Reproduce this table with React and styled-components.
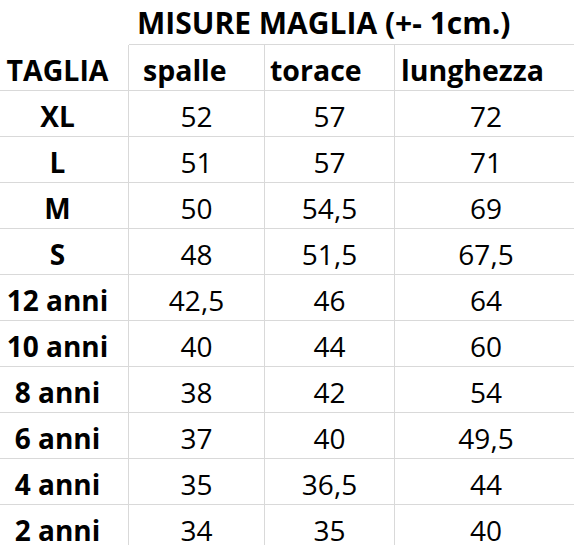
import React from 'react'
import styled, { createGlobalStyle } from 'styled-components'

const GlobalStyle = createGlobalStyle`
  html, body { margin: 0; padding: 0; background: #fff; overflow: hidden; }
  body { font-family: "Open Sans", "Noto Sans", sans-serif; color: #000; }
`;

const Sheet = styled.div`
  display: grid;
  grid-template-columns: 142px 136px 130px 182px;
  grid-template-rows: 45px repeat(11, 46px);
  margin-left: -13px;
  width: 590px;
`;

const Blank = styled.div``;

const Title = styled.div`
  grid-column: 2 / 5;
  display: flex;
  align-items: center;
  padding-left: 8px;
  font-size: 30px;
  font-weight: 700;
  border-bottom: 1px solid #d9d9d9;
  white-space: nowrap;
`;

const Cell = styled.div`
  display: flex;
  align-items: center;
  justify-content: ${p => (p.$indent != null ? 'flex-start' : 'center')};
  padding-left: ${p => (p.$indent != null ? `${p.$indent}px` : '0')};
  padding-top: 5px;
  box-sizing: border-box;
  font-size: ${p => (p.$head ? '28.5px' : '28px')};
  font-weight: ${p => (p.$bold ? 700 : 400)};
  border-bottom: 1px solid #d9d9d9;
  border-right: ${p => (p.$last ? 'none' : '1px solid #d9d9d9')};
  white-space: nowrap;
`;

const headers = [
  { label: 'TAGLIA', indent: null },
  { label: 'spalle', indent: 14 },
  { label: 'torace', indent: 5 },
  { label: 'lunghezza', indent: 6 },
];

const rows = [
  ['XL', '52', '57', '72'],
  ['L', '51', '57', '71'],
  ['M', '50', '54,5', '69'],
  ['S', '48', '51,5', '67,5'],
  ['12 anni', '42,5', '46', '64'],
  ['10 anni', '40', '44', '60'],
  ['8 anni', '38', '42', '54'],
  ['6 anni', '37', '40', '49,5'],
  ['4 anni', '35', '36,5', '44'],
  ['2 anni', '34', '35', '40'],
];

function App() {
  return (
    <>
      <GlobalStyle />
      <Sheet>
        <Blank />
        <Title>MISURE MAGLIA (+- 1cm.)</Title>
        {headers.map((h, i) => (
          <Cell key={h.label} $head $bold $indent={h.indent} $last={i === 3}>
            {h.label}
          </Cell>
        ))}
        {rows.map(r =>
          r.map((v, i) => (
            <Cell key={r[0] + i} $bold={i === 0} $last={i === 3}>
              {v}
            </Cell>
          ))
        )}
      </Sheet>
    </>
  )
}

export default App
